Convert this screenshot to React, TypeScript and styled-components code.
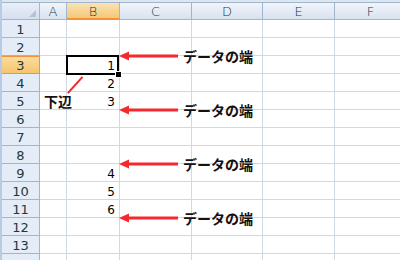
import styled, { createGlobalStyle, css } from 'styled-components'

const GlobalStyle = createGlobalStyle`
  html, body {
    margin: 0;
    padding: 0;
    background: #ffffff;
  }
  body {
    width: 400px;
    height: 260px;
    overflow: hidden;
  }
`

const columns = [
  { label: 'A', width: 27 },
  { label: 'B', width: 53 },
  { label: 'C', width: 72 },
  { label: 'D', width: 71 },
  { label: 'E', width: 72 },
  { label: 'F', width: 72 },
]

const template = `38px ${columns.map((c) => `${c.width}px`).join(' ')}`

const values: Record<number, string> = { 3: '1', 4: '2', 5: '3', 9: '4', 10: '5', 11: '6' }

// sheet row just above each edge the arrows point at
const edges = [2, 5, 8, 11]

const rows = Array.from({ length: 14 }, (_, i) => i + 1)

const App = () => {
  return (
    <Frame>
      <GlobalStyle />
      <TopStrip />
      <Body>
        <Sheet $cols={template}>
          <Corner>
            <CornerMark />
          </Corner>
          {columns.map((c) => (
            <ColHeader key={c.label} $active={c.label === 'B'}>{c.label}</ColHeader>
          ))}
          {rows.map((r) => (
            <Row key={r} r={r} />
          ))}
        </Sheet>

        <Overlay $cols={template}>
          <Selection>
            <FillHandle />
          </Selection>

          {edges.map((above) => (
            <Callout key={above} $row={above + 1}>
              <svg width="60" height="18" viewBox="0 0 60 18">
                <line x1="8" y1="9" x2="59" y2="9" stroke="#f5282d" strokeWidth="3" />
                <polygon points="0,9 10,4.5 10,13.5" fill="#f5282d" />
              </svg>
              <CalloutText>データの端</CalloutText>
            </Callout>
          ))}

          <Annotation>
            <svg width="46" height="22" viewBox="0 0 46 22">
              <line x1="42" y1="1" x2="24" y2="21" stroke="#f5282d" strokeWidth="2.5" />
            </svg>
            <EdgeLabel>下辺</EdgeLabel>
          </Annotation>
        </Overlay>
      </Body>
    </Frame>
  )
}

const Row = ({ r }: { r: number }) => (
  <>
    <RowHeader $active={r === 3}>{r < 14 ? r : ''}</RowHeader>
    {columns.map((c) => (
      <Cell key={c.label}>{c.label === 'B' ? values[r] : ''}</Cell>
    ))}
  </>
)

export default App

const Frame = styled.div`
  width: 400px;
  height: 260px;
  overflow: hidden;
  background: #ffffff;
  border-left: 2px solid #b7cbe6;
  box-sizing: border-box;
`

const TopStrip = styled.div`
  height: 2px;
  background: #e1e6ed;
`

const Body = styled.div`
  position: relative;
`

const Sheet = styled.div<{ $cols: string }>`
  display: grid;
  grid-template-columns: ${(p) => p.$cols};
  grid-auto-rows: 18px;
  font-family: "DejaVu Sans", "Liberation Sans", sans-serif;
`

const Overlay = styled.div<{ $cols: string }>`
  position: absolute;
  inset: 0;
  display: grid;
  grid-template-columns: ${(p) => p.$cols};
  grid-template-rows: repeat(15, 18px);
  pointer-events: none;
`

const headerBase = css`
  box-sizing: border-box;
  display: flex;
  align-items: center;
  justify-content: center;
  font-size: 12px;
  color: #22393a;
  border-right: 1px solid #9eb6ce;
  border-bottom: 1px solid #9eb6ce;
`

const Corner = styled.div`
  ${headerBase}
  position: relative;
  border-top: 1px solid #9eb6ce;
  background: linear-gradient(#e9eff8, #d5dfee);
`

const CornerMark = styled.div`
  position: absolute;
  right: 3px;
  bottom: 2px;
  width: 0;
  height: 0;
  border-left: 7px solid transparent;
  border-bottom: 7px solid #b6c3d3;
`

const ColHeader = styled.div<{ $active?: boolean }>`
  ${headerBase}
  border-top: 1px solid #9eb6ce;
  padding-top: 1px;
  font-size: 13px;
  font-weight: 300;
  background: ${(p) =>
    p.$active ? 'linear-gradient(#fae2b4, #f5c877)' : 'linear-gradient(#f1f5fb, #d8e2ef)'};
  ${(p) => p.$active && css`border-bottom: 2px solid #f29436;`}
`

const RowHeader = styled.div<{ $active?: boolean }>`
  ${headerBase}
  padding-top: 2px;
  font-size: 13px;
  background: ${(p) => (p.$active ? 'linear-gradient(#fbdda4, #f6c56e)' : '#e4ecf7')};
  ${(p) =>
    p.$active &&
    css`
      border-right: 1px solid #f29436;
      border-bottom: 1px solid #f29436;
      box-shadow: inset 0 1px 0 #f29436;
    `}
`

const Cell = styled.div`
  box-sizing: border-box;
  border-right: 1px solid #d0d7e5;
  border-bottom: 1px solid #d0d7e5;
  font-size: 12px;
  color: #000;
  text-align: right;
  padding: 3px 4px 0 0;
  line-height: 15px;
`

const Selection = styled.div`
  position: relative;
  grid-column: 3;
  grid-row: 4;
  margin: -1px 1px -1px -1px;
  border: 2px solid #000;
`

const FillHandle = styled.div`
  position: absolute;
  right: -5px;
  bottom: -5px;
  width: 5px;
  height: 5px;
  background: #000;
  border: 1px solid #fff;
`

const Callout = styled.div<{ $row: number }>`
  grid-column: 4 / -1;
  grid-row: ${(p) => p.$row} / span 2;
  align-self: center;
  margin-left: -1px;
  display: flex;
  align-items: center;
  height: 18px;
`

const CalloutText = styled.span`
  margin-left: 4px;
  font-family: "Noto Sans CJK JP", sans-serif;
  font-weight: 700;
  font-size: 14px;
  color: #111;
  white-space: nowrap;
`

const Annotation = styled.div`
  grid-column: 2 / span 2;
  grid-row: 5 / span 2;
  display: flex;
  flex-direction: column;
  align-items: flex-start;
  padding: 2px 0 0 4px;
`

const EdgeLabel = styled.div`
  margin-top: -2px;
  font-family: "Noto Sans CJK JP", sans-serif;
  font-weight: 700;
  font-size: 14px;
  color: #111;
  line-height: 18px;
`
